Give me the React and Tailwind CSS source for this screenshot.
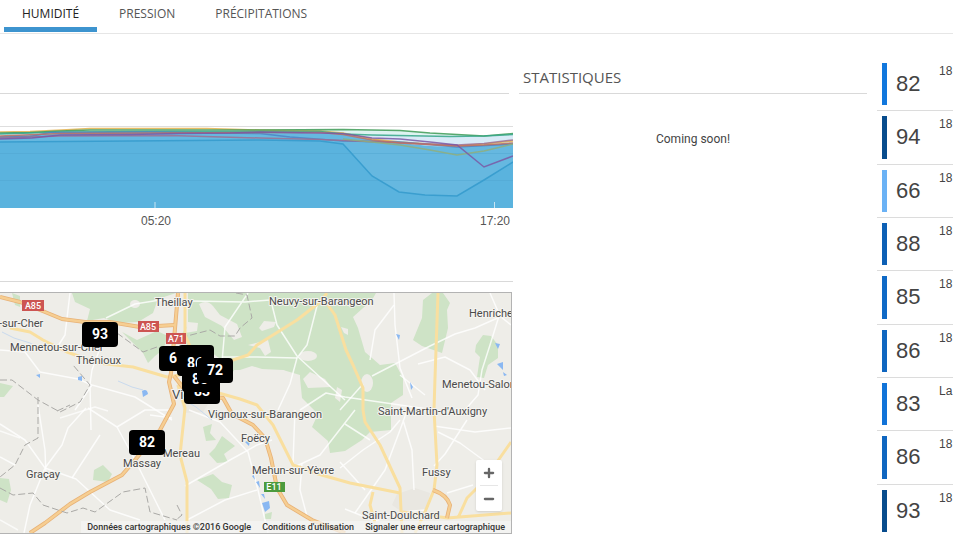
import { useState } from "react";
import { Minus, Plus } from "lucide-react";

const TABS = ["HUMIDITÉ", "PRESSION", "PRÉCIPITATIONS"];

const STATIONS = [
    { value: 82, time: "18", color: "bg-[#1177dd]" },
    { value: 94, time: "18", color: "bg-[#084c8d]" },
    { value: 66, time: "18", color: "bg-[#6bb2f5]" },
    { value: 88, time: "18", color: "bg-[#0d60b5]" },
    { value: 85, time: "18", color: "bg-[#0f69c6]" },
    { value: 86, time: "18", color: "bg-[#0f66c0]" },
    { value: 83, time: "La", color: "bg-[#1173d8]" },
    { value: 86, time: "18", color: "bg-[#0f66c0]" },
    { value: 93, time: "18", color: "bg-[#084c8d]" },
];

const MARKERS = [
    { value: 93, position: "left-[82px] top-[29px]" },
    { value: 82, position: "left-[129px] top-[137px]" },
    { value: 66, position: "left-[159px] top-[53px]" },
    { value: 88, position: "left-[178px] top-[52px]" },
    { value: 86, position: "left-[177px] top-[58px]" },
    { value: 83, position: "left-[184px] top-[86px]" },
    { value: 85, position: "left-[182px] top-[74px]" },
    { value: 72, position: "left-[197px] top-[65px]" },
];

const SERIES = [
    { color: "#e2b04a", points: "0,132 30,131.500 62,130 90,128.500 207,128.500 260,130 320,131 343,133 372,139 400,142 457,146 484,144 513,141" },
    { color: "#3d9a55", points: "0,133 30,132.500 60,131 90,130 170,130 260,130 343,129.500 400,130.500 430,133 484,136 513,133.500" },
    { color: "#35a68a", points: "0,134 60,132 170,131.500 320,131.500 343,134 372,135 450,136.500 484,136 513,134.500" },
    { color: "#4d83c4", points: "0,137 30,136.500 50,132.500 150,132 260,133.500 290,137 343,141 400,142 457,147 513,144" },
    { color: "#9d6f92", points: "0,138 60,136 170,135.500 260,138 320,139.500 380,142 457,145 484,143.500 513,140" },
    { color: "#c0705f", points: "0,136 60,133.500 260,132.500 320,132.500 343,134.500 372,140 400,143 457,146 484,145 513,143" },
    { color: "#8fae7c", points: "343,139 372,142 400,145 430,150 457,155 484,151 513,144" },
    { color: "#7a58a5", points: "0,139 32,138 60,135 130,134.500 180,133.500 230,133 260,132 343,133.500 372,138 400,139 430,142 457,145 484,167 513,156" },
];

const LOW = "0,142 130,141 260,140 320,141 343,144 372,176 399,192 425,195 457,196 484,180 513,162";

function HumidityChart() {
    return (
        <svg viewBox="0 118 513 112" className="mt-6 block h-auto w-full font-['Liberation_Sans',sans-serif]">
            <line x1="0" x2="513" y1="126.500" y2="126.500" stroke="#dedede" />
            <polygon points="0,133 60,131 90,129 260,129.500 343,129.500 400,130.500 430,133 484,136 513,133.500 513,208 0,208" fill="#def3f1" />
            <polygon points="0,135 60,132 260,132 343,135 450,137 484,136.500 513,135 513,208 0,208" fill="#d8eaf7" />
            <polygon points="0,136 60,133 260,132 343,134 372,140 400,143 430,146 457,147 484,145 513,143 513,208 0,208" fill="#66b8e0" />
            <polygon points={`${LOW} 513,208 0,208`} fill="#5ab3de" />
            <line x1="0" x2="513" y1="153.500" y2="153.500" stroke="#50a6d0" strokeOpacity="0.5" />
            <line x1="0" x2="513" y1="180.500" y2="180.500" stroke="#50a6d0" strokeOpacity="0.5" />
            {SERIES.map((serie) => (
                <polyline key={serie.color} points={serie.points} fill="none" stroke={serie.color} strokeWidth="1.500" strokeOpacity="0.85" />
            ))}
            <polyline points={LOW} fill="none" stroke="#3a9ecf" strokeWidth="1.500" />
            <path d="M155 202v6M494.500 202v6" stroke="#c8e4f2" />
            <g fill="#555" fontSize="12">
                <text x="156" y="225" textAnchor="middle">05:20</text>
                <text x="495" y="225" textAnchor="middle">17:20</text>
            </g>
        </svg>
    );
}

function MapDrawing() {
    return (
        <svg
            viewBox="0 293 511 240"
            preserveAspectRatio="xMinYMin slice"
            className="absolute inset-0 h-full w-full font-[Roboto,sans-serif]"
        >
            <rect x="0" y="293" width="511" height="240" fill="#eeede8" />
            <g fill="#cee3c6">
                <path d="M72 293L75 302L90 309L87 321L104 318L117 323L138 322L153 313L158 299L176 293Z" />
                <path d="M122 332L137 340L157 331L168 336L163 350L155 356L148 363L143 353Z" />
                <path d="M188 293L376 293L372 300L353 317L358 328L360 335L365 352L380 365L395 363L403 378L403 395L391 403L391 430L370 432L362 440L345 451L330 453L328 441L312 427L318 414L302 398L300 378L283 370L262 369L252 366L240 370L222 374L222 360L205 348L187 345L181 335L188 325Z" />
                <path d="M432 293L423 300L422 318L413 340L422 346L442 353L448 328L447 310L450 303L443 293Z" />
                <path d="M476 345L483 335L491 336L498 345L498 358L488 365L484 378L477 377L480 357L475 352Z" />
                <path d="M12 293L20 296L20 307L15 305ZM0 383L13 386L4 397L0 397ZM0 478L9 479L11 490L7 503L0 500Z" />
                <path d="M94 470L103 465L112 474L108 482L93 480ZM203 427L212 424L210 433L216 440L206 441Z" />
                <path d="M222 436L235 446L224 454L228 462L217 463L209 454L215 448ZM197 480L213 474L222 482L232 485L229 498L218 499L211 489Z" />
                <path d="M265 514L272 512L271 519L264 519Z" />
            </g>
            <g fill="#eeede8">
                <path d="M199 304Q207 299 213 306L220 315L237 324L242 337L234 340L222 326L205 317Z" />
                <path d="M259 328L264 321L276 322L274 327L262 331ZM248 345L268 340L271 352L265 356L260 348Z" />
                <ellipse cx="308" cy="356" rx="9" ry="5" />
                <path d="M303 379L310 372L325 379L331 387L308 388ZM234 370L283 370L300 375L300 404L240 405L224 396Z" />
                <path d="M341 327L348 329L348 335L344 333ZM337 387L342 390L340 402L335 398Z" />
                <ellipse cx="367" cy="383" rx="6" ry="9" />
                <ellipse cx="135" cy="304" rx="5" ry="4" />
                <path d="M188 322L198 323L197 331L185 333Z" />
            </g>
            <path d="M397 494L415 488L430 493L426 511L405 514L392 505ZM176 385L195 380L216 392L203 412L184 413Z" fill="#e9e7e1" />
            <g fill="none" stroke="#fff" strokeWidth="1.500" strokeOpacity="0.800" strokeLinejoin="round">
                <path d="M70 293L65 335L58 346M110 321L92 370L90 384L91 430M0 350L25 352L40 372L78 379L92 385L135 397L172 420M92 385L75 410" />
                <path d="M106 318L135 304L160 300L190 301L245 302L270 300M248 293L225 327L222 362M272 305L277 325L297 356L345 400M318 302L307 345L297 358L290 384L278 410" />
                <path d="M222 357L257 357L297 358M300 410L326 393L345 397L400 405L434 410M394 293L395 325L400 368L412 398" />
                <path d="M372 376L430 346L455 334L475 328L502 316M363 384L340 410M499 316L490 345L482 370L478 395L465 410M500 316L511 325M490 293L500 316" />
                <path d="M394 305L375 330L370 360M418 364L445 357L470 370L485 390M400 375L425 395" />
                <path d="M0 424L25 440L45 468L76 479L110 510L140 520M88 408L117 427L145 410L172 410M117 427L135 460L165 520M86 408L68 428L62 445L45 468L30 505L24 533" />
                <path d="M38 405L45 450L46 475M100 435L72 478M150 415L172 418M0 457L15 465M185 486L230 460L257 445L272 440" />
                <path d="M189 410L220 422L248 452L258 490L268 533M187 520L225 500L257 490M288 470L320 455L355 410M295 410L293 463" />
                <path d="M302 463L300 490L308 520M340 462L365 490M355 513L385 470L400 430L408 408M403 420L412 450L414 490M340 468L363 450L390 432L400 420" />
                <path d="M467 420L445 454L434 466M434 426L475 432L511 428M438 432L460 443L490 465M345 509L375 521L402 512L425 510M473 485L447 493M345 424L370 440" />
                <path d="M0 520L18 530M20 438L0 431M60 418L95 407L108 411" strokeOpacity="0.700" />
            </g>
            <g fill="none" stroke="#f9df9f" strokeWidth="3" strokeLinejoin="round">
                <path d="M10 328L30 332L43 340L67 352L98 363L133 367L167 377L180 375" />
                <path d="M185 293L185 335L190 346M223 366L233 360L248 355L257 345L297 320L320 302L327 293" />
                <path d="M323 298L335 315L346 350L353 365L363 388L363 410L365 422L380 445L400 488L402 533" />
                <path d="M438 293L435 378L434 410L437 465L434 490L425 512L415 533" />
                <path d="M178 385L185 408L180 455L187 482L187 533M208 390L240 399L257 405L273 425L293 465L318 474L350 483L400 493" />
                <path d="M373 492L370 505L375 523M458 518L467 498L483 482L511 442M447 518L511 513M402 512L448 518M178 385L190 380L204 388L208 403" />
            </g>
            <g fill="none" strokeLinejoin="round">
                <g stroke="#e8b277" strokeWidth="4">
                    <path d="M0 297L20 302L45 312L62 319L85 322L110 322L140 327L175 325" />
                    <path d="M178 293L174 340L171 373L169 382L174 404L160 430L135 460L122 475L90 492L70 504L45 523L30 533" />
                    <path d="M174 376L188 394L223 398L232 414L253 425L265 438L271 458L277 488L287 505L312 520L345 533M433 490Q447 495 450 505L447 518" />
                </g>
                <g stroke="#f6ce92" strokeWidth="2.400">
                    <path d="M0 297L20 302L45 312L62 319L85 322L110 322L140 327L175 325" />
                    <path d="M178 293L174 340L171 373L169 382L174 404L160 430L135 460L122 475L90 492L70 504L45 523L30 533" />
                    <path d="M174 376L188 394L223 398L232 414L253 425L265 438L271 458L277 488L287 505L312 520L345 533M433 490Q447 495 450 505L447 518" />
                </g>
            </g>
            <g fill="none" stroke="#aaa9a6" strokeWidth="1" strokeDasharray="7 3">
                <path d="M117 333L143 352L157 347M0 380L12 380L38 400L60 412L80 402L90 385L73 365M38 397L38 438L25 445L15 465L0 477" />
                <path d="M236 293L247 295L252 318L240 328L235 336L220 336L210 330L187 336M57 411L70 405" />
                <path d="M0 488L13 495L33 493L43 505L67 513L83 508L95 512L123 492L145 488L150 512L177 520M177 505L182 515L176 520" />
            </g>
            <g fill="#8ab8f2">
                <path d="M142 391Q147 388 148 394L143 397ZM78 377L82 376L82 381L78 380ZM36 375L40 374L40 378Z" />
                <path d="M396 334L400 335L399 340ZM495 343L500 344L498 349ZM497 364L503 362L503 370ZM410 382L413 387L411 390ZM503 372L507 375L504 376Z" />
                <path d="M262 503L269 501L270 508L265 512ZM256 482L259 481L260 488ZM252 476L254 475L255 480ZM261 494L264 494L265 499ZM245 442L250 440L249 446Z" />
            </g>
            <path d="M2 332L14 338L30 343L43 350M118 381L132 387L143 390M184 400L196 407L212 420" fill="none" stroke="#c9daee" strokeWidth="1" />
            <g fontSize="9" fontWeight="500" fill="#fff" textAnchor="middle">
                <rect x="22" y="300" width="22" height="11" fill="#cd5552" />
                <text x="33" y="309">A85</text>
                <rect x="138" y="321" width="21" height="11" fill="#cd5552" />
                <text x="148" y="330">A85</text>
                <rect x="166" y="333" width="20" height="11" fill="#cd5552" />
                <text x="176" y="342">A71</text>
                <rect x="264" y="482" width="21" height="10" fill="#4c9b3d" />
                <text x="274" y="490">E11</text>
            </g>
            <g fill="#4a4a4a" fontSize="11" stroke="#f5f4f0" strokeWidth="2" strokeLinejoin="round" paintOrder="stroke">
                <text x="155" y="306">Theillay</text>
                <text x="269" y="305">Neuvy-sur-Barangeon</text>
                <text x="469" y="317">Henriche</text>
                <text x="-1" y="327">-sur-Cher</text>
                <text x="10" y="351">Mennetou-sur-Cher</text>
                <text x="76" y="364">Thénioux</text>
                <text x="442" y="388">Menetou-Salon</text>
                <text x="208" y="418">Vignoux-sur-Barangeon</text>
                <text x="378" y="415">Saint-Martin-d'Auxigny</text>
                <text x="241" y="442">Foëcy</text>
                <text x="163" y="457">Mereau</text>
                <text x="123" y="467">Massay</text>
                <text x="26" y="478">Graçay</text>
                <text x="252" y="474">Mehun-sur-Yèvre</text>
                <text x="422" y="476">Fussy</text>
                <text x="362" y="519">Saint-Doulchard</text>
                <text x="172" y="399" fontSize="13">Vierzon</text>
            </g>
        </svg>
    );
}

function StationMap() {
    return (
        <div className="relative mt-[10px] mr-px h-[242px] overflow-hidden border border-l-0 border-[#b3b3b3] font-[Roboto,sans-serif]">
            <MapDrawing />
            {MARKERS.map((marker) => (
                <button
                    key={marker.value}
                    type="button"
                    className={`absolute h-[25px] w-9 rounded bg-black text-center text-[14px] font-bold text-white ${marker.position}`}
                >
                    {marker.value}
                </button>
            ))}
            <div className="absolute right-[9px] bottom-[22px] flex w-[26px] flex-col rounded-xs bg-white px-1 text-[#666] shadow">
                <button type="button" aria-label="Zoom avant" className="flex h-[26px] items-center justify-center border-b border-[#e6e6e6]">
                    <Plus size={14} strokeWidth={4} />
                </button>
                <button type="button" aria-label="Zoom arrière" className="flex h-[25px] items-center justify-center">
                    <Minus size={14} strokeWidth={4} />
                </button>
            </div>
            <div className="absolute right-0 bottom-0 flex gap-[11px] bg-[#f5f5f5]/70 px-[6px] text-[9px] leading-[12px] font-medium whitespace-nowrap text-[#333]">
                <span>Données cartographiques ©2016 Google</span>
                <a href="#conditions">Conditions d'utilisation</a>
                <a href="#erreur">Signaler une erreur cartographique</a>
            </div>
        </div>
    );
}

export default function App() {
    const [active, setActive] = useState("HUMIDITÉ");

    return (
        <div className="h-screen overflow-hidden bg-white font-['Open_Sans',sans-serif] text-[#444]">
            <nav className="flex gap-1 border-b border-[#e6e6e6] pb-px pl-1">
                {TABS.map((tab) => (
                    <button
                        key={tab}
                        type="button"
                        onClick={() => setActive(tab)}
                        className={`h-8 border-b-5 px-[18px] text-[12px] leading-[27px] ${
                            tab === active ? "border-[#3d94cf] text-[#222]" : "border-transparent text-[#555]"
                        }`}
                    >
                        {tab}
                    </button>
                ))}
            </nav>
            <main className="flex">
                <section className="min-w-0 flex-[513]">
                    <div className="mr-1 h-[60px] border-b border-[#d9d9d9]" />
                    <HumidityChart />
                    <div className="mt-[51px] border-b border-[#d9d9d9]" />
                    <StationMap />
                </section>
                <section className="ml-[6px] min-w-0 flex-[348]">
                    <h2 className="flex h-[60px] items-end border-b border-[#d9d9d9] px-1 pb-[5px] text-[15px] text-[#555]">STATISTIQUES</h2>
                    <p className="mt-[35px] text-center font-[Roboto,sans-serif] text-[12px] leading-5">Coming soon!</p>
                </section>
                <ul className="mt-6 ml-[10px] flex h-[480px] w-[76px] flex-col font-['Liberation_Sans',sans-serif]">
                    {STATIONS.map((station, index) => (
                        <li key={index} className="flex flex-1 border-b border-[#dcdcdc] py-[5px] pl-[5px]">
                            <span className={`w-[5px] ${station.color}`} />
                            <span className="ml-[9px] w-[43px] self-center text-[22px] leading-6">{station.value}</span>
                            <span className="text-[12px] leading-4">{station.time}</span>
                        </li>
                    ))}
                </ul>
            </main>
        </div>
    );
}
